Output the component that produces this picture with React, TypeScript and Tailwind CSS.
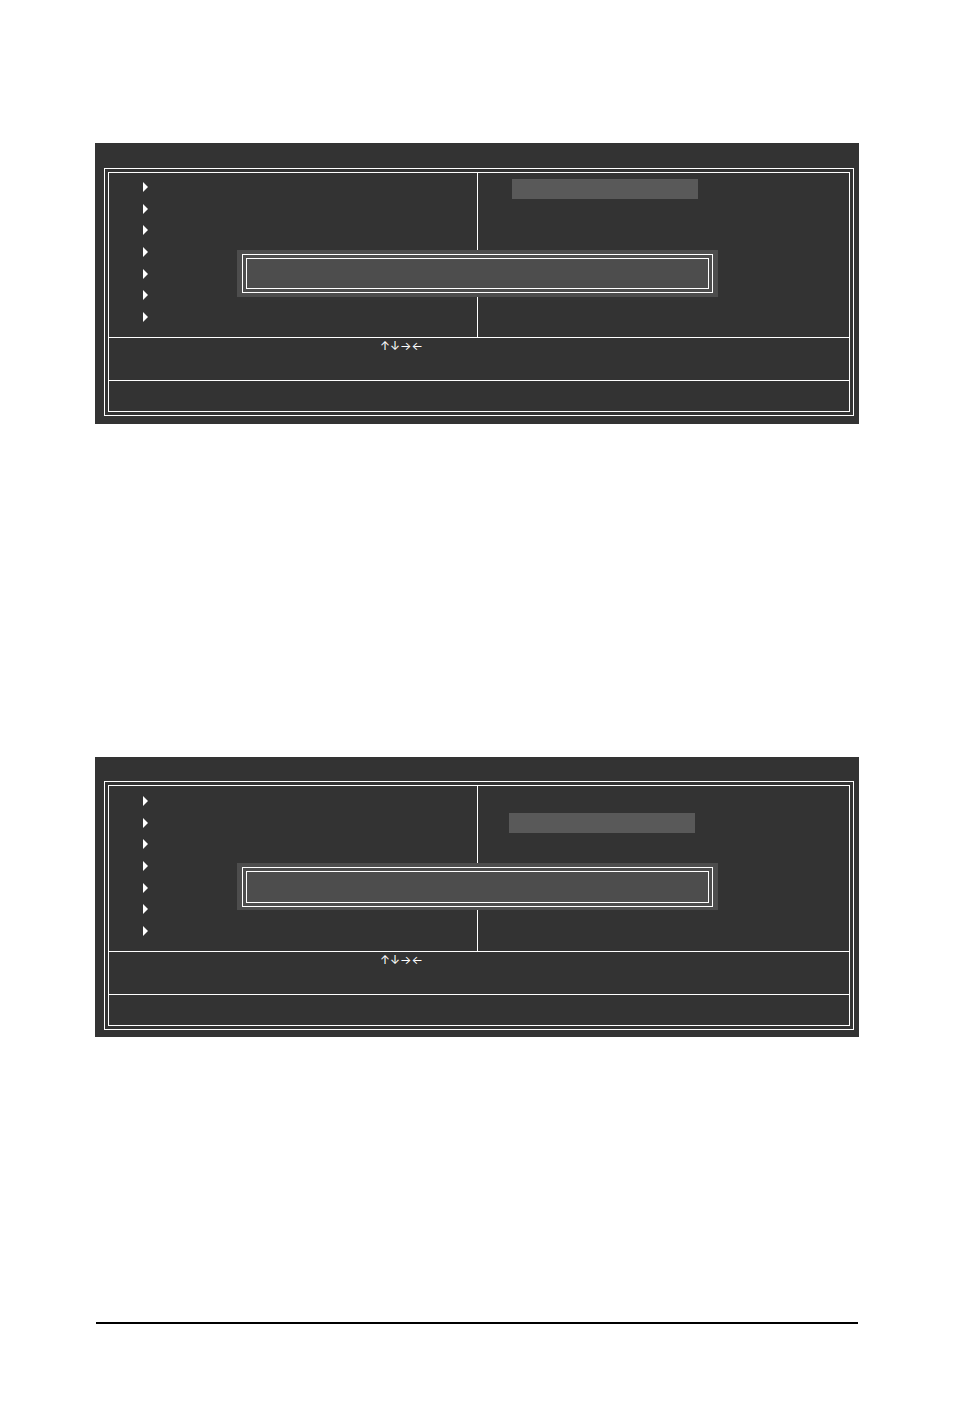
import clsx from 'clsx';

interface PanelProps {
  framePadding: string;
  menuHeight: string;
  highlight: string;
  popup: string;
  popupHeight: string;
}

const MENU_ROWS = 7;
const KEYS = ['↑', '↓', '→', '←'];

function MenuMarker() {
  return (
    <svg width="5" height="10" viewBox="0 0 5 10" fill="#fff" className="block" aria-hidden="true">
      <path d="M0 0L5 5L0 10Z" />
    </svg>
  );
}

function BiosPanel({ framePadding, menuHeight, highlight, popup, popupHeight }: PanelProps) {
  return (
    <section className={clsx('relative bg-[#333333] pl-[9px] pr-[5px]', framePadding)}>
      {/* Double frame */}
      <div className="border border-white p-[3px]">
        <div className="border border-white">
          <div className={clsx('flex border-b border-white', menuHeight)}>
            <ul className="flex w-[368px] flex-col justify-end pb-[15px] pl-[34px]">
              <li className="flex h-[140px] flex-col justify-between">
                {Array.from({ length: MENU_ROWS }, (_, i) => (
                  <MenuMarker key={i} />
                ))}
              </li>
            </ul>
            <div className={clsx('flex-1 border-l border-white', highlight)}>
              <div className="h-5 w-[186px] bg-[#595959]" />
            </div>
          </div>

          {/* Key hints */}
          <div className="flex h-[43px] items-start border-b border-white pl-[271px] font-['Inter',sans-serif] text-xs leading-4 text-white">
            {KEYS.map((key) => (
              <span key={key}>{key}</span>
            ))}
          </div>
          <div className="h-[30px]" />
        </div>
      </div>

      {/* Confirmation popup */}
      <div className={clsx('absolute left-[142px] right-[141px] bg-[#4d4d4d] px-[5px] pt-1', popup)}>
        <div className="border border-white p-[3px]">
          <div className={clsx('border border-white', popupHeight)} />
        </div>
      </div>
    </section>
  );
}

export default function App() {
  return (
    <main className="min-h-screen bg-white px-[95px] pb-[94px] pt-[143px]">
      <BiosPanel
        framePadding="pt-[25px] pb-2"
        menuHeight="h-[165px]"
        highlight="pl-[34px] pt-1.5"
        popup="top-[107px] pb-1"
        popupHeight="h-[31px]"
      />
      <div className="h-[333px]" />
      <BiosPanel
        framePadding="pt-6 pb-[7px]"
        menuHeight="h-[166px]"
        highlight="pl-[31px] pt-[27px]"
        popup="top-[106px] pb-[3px]"
        popupHeight="h-8"
      />
      <hr className="mx-px mt-[285px] border-t-2 border-black" />
    </main>
  );
}
